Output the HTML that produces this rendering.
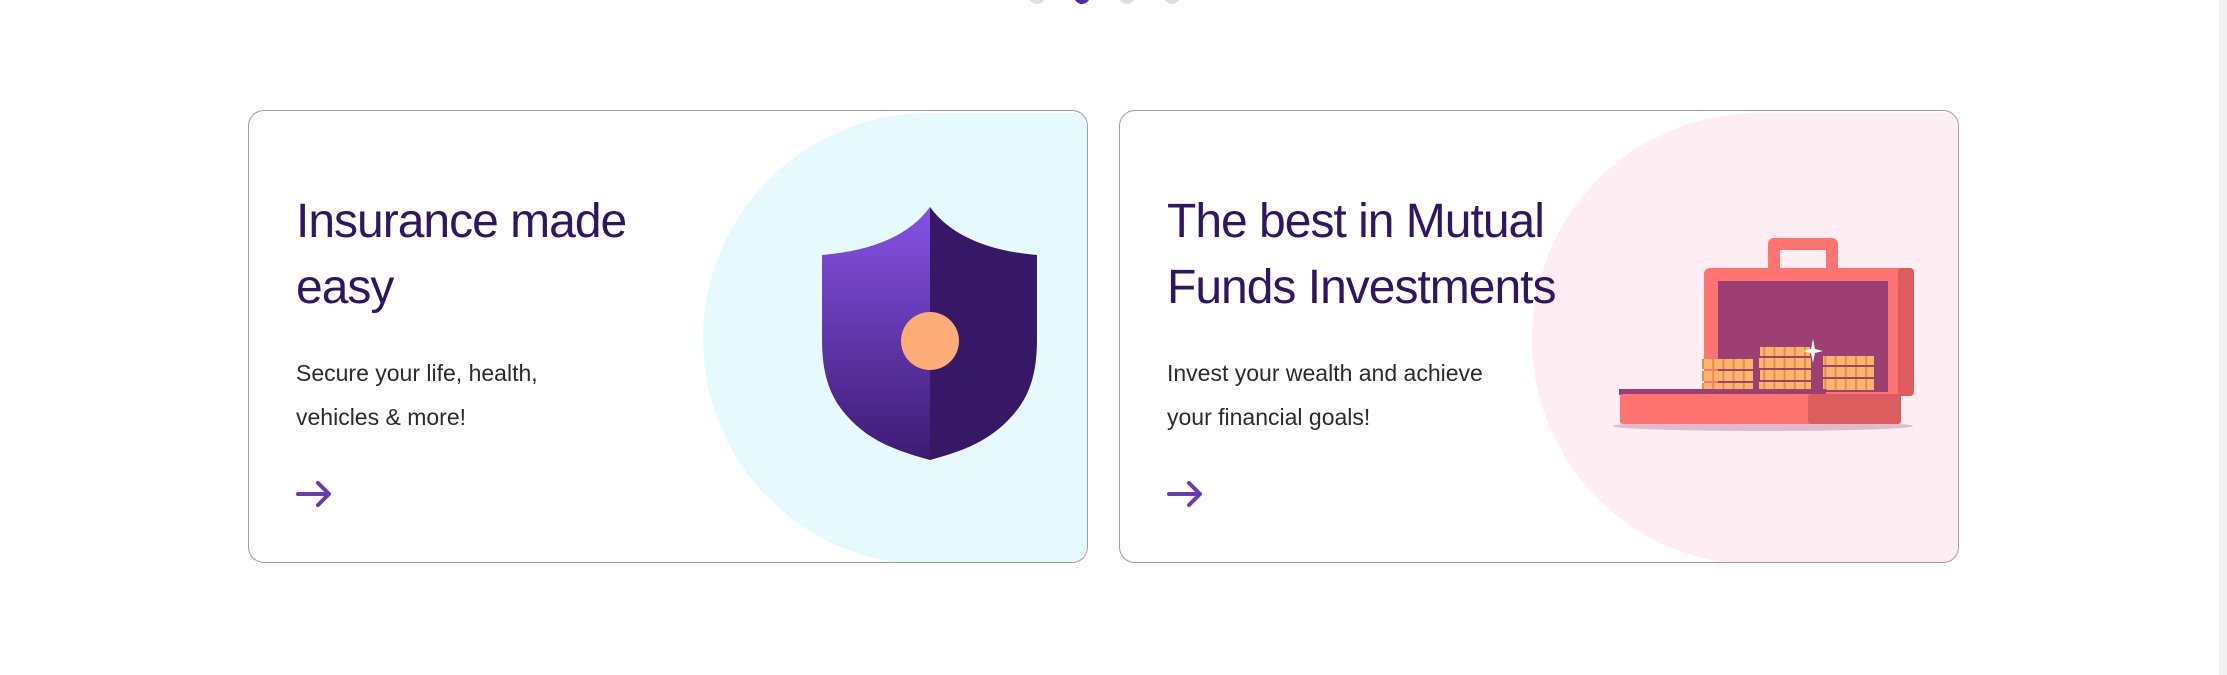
<!DOCTYPE html>
<html><head><meta charset="utf-8"><style>
html,body{margin:0;padding:0;background:#fff;width:2227px;height:675px;overflow:hidden;position:relative;font-family:"Liberation Sans",sans-serif}
.dot{position:absolute;top:-12px;width:16px;height:16px;border-radius:50%;background:#dedede}
.card{position:absolute;top:110px;height:453px;border:1px solid #9d9d9d;border-radius:16px;overflow:hidden;background:#fff;box-sizing:border-box}
.t{position:absolute;left:47px;top:78px;font-size:48px;line-height:66px;color:#2f1562;font-weight:normal;letter-spacing:-1px;margin:0}
.p{position:absolute;left:47px;top:240px;font-size:23px;line-height:44px;color:#2a2a2a;margin:0}
.ar{position:absolute;left:47px;top:369px}
.sb{position:absolute;right:0;top:0;width:8px;height:675px;background:#f1f1f1}
</style></head><body>
<div class="dot" style="left:1029px"></div>
<div class="dot" style="left:1074px;background:#4f2aa6"></div>
<div class="dot" style="left:1119px"></div>
<div class="dot" style="left:1164px"></div>

<div class="card" style="left:248px;width:840px">
 <svg width="840" height="453" style="position:absolute;left:0;top:0">
  <defs><linearGradient id="g" x1="0" y1="0" x2="0" y2="1"><stop offset="0" stop-color="#8653e6"/><stop offset="1" stop-color="#3c1b72"/></linearGradient></defs>
  <circle cx="680" cy="228" r="226" fill="#e6fafd"/>
  <rect x="680" y="2" width="160" height="452" fill="#e6fafd"/>
  <path d="M681 96 C660 125 622 140 573 144 L573 228 C573 262 580 285 598 305 C620 330 648 340 681 349 Z" fill="url(#g)"/>
  <path d="M681 96 C702 125 740 140 788 144 L788 228 C788 262 781 285 763 305 C741 330 714 340 681 349 Z" fill="#361866"/>
  <circle cx="681" cy="230" r="29" fill="#fdac77"/>
 </svg>
 <h2 class="t">Insurance made<br>easy</h2>
 <p class="p">Secure your life, health,<br>vehicles &amp; more!</p>
 <svg class="ar" width="38" height="28" viewBox="0 0 38 28"><path d="M2 14 H33 M22 3 L33 14 L22 25" fill="none" stroke="#6a3ab2" stroke-width="4" stroke-linecap="round" stroke-linejoin="round"/></svg>
</div>

<div class="card" style="left:1119px;width:840px">
 <svg width="840" height="453" style="position:absolute;left:0;top:0">
  <defs>
   <pattern id="c" x="582" y="0" width="10.2" height="40" patternUnits="userSpaceOnUse"><rect width="10.2" height="40" fill="#f9b46e"/><rect x="0" width="2" height="40" fill="#e3913f"/></pattern>
  </defs>
  <circle cx="638" cy="228" r="226" fill="#feedf3"/>
  <rect x="638" y="2" width="202" height="452" fill="#feedf3"/>
  <ellipse cx="643" cy="315" rx="150" ry="5" fill="#dcbcc8"/>
  <rect x="648" y="127" width="70" height="40" rx="6" fill="#ff7470"/>
  <rect x="660" y="139" width="46" height="28" fill="#feedf3"/>
  <rect x="584" y="157" width="210" height="128" rx="6" fill="#ff7470"/>
  <rect x="778" y="157" width="16" height="128" rx="4" fill="#db5d5d"/>
  <rect x="598" y="170" width="170" height="111" fill="#9e3f74"/>
  <g fill="url(#c)">
   <rect x="582" y="248" width="51" height="10"/><rect x="582" y="260" width="51" height="10"/><rect x="582" y="272" width="51" height="9"/>
   <rect x="640" y="236" width="50" height="9"/><rect x="639" y="247" width="52" height="10"/><rect x="640" y="259" width="51" height="10"/><rect x="639" y="271" width="52" height="10"/>
   <rect x="703" y="245" width="51" height="9"/><rect x="703" y="256" width="51" height="10"/><rect x="703" y="268" width="51" height="11"/>
  </g>
  <path d="M693 228 L695 238 L703 240 L695 242 L693 252 L691 242 L683 240 L691 238 Z" fill="#fff"/>
  <rect x="499" y="278" width="207" height="6" fill="#9e3f74"/>
  <rect x="500" y="283" width="281" height="30" rx="3" fill="#ff7470"/>
  <rect x="688" y="283" width="93" height="30" rx="3" fill="#db5d5d"/>
 </svg>
 <h2 class="t">The best in Mutual<br>Funds Investments</h2>
 <p class="p">Invest your wealth and achieve<br>your financial goals!</p>
 <svg class="ar" width="38" height="28" viewBox="0 0 38 28"><path d="M2 14 H33 M22 3 L33 14 L22 25" fill="none" stroke="#6a3ab2" stroke-width="4" stroke-linecap="round" stroke-linejoin="round"/></svg>
</div>
<div class="sb"></div>
</body></html>
